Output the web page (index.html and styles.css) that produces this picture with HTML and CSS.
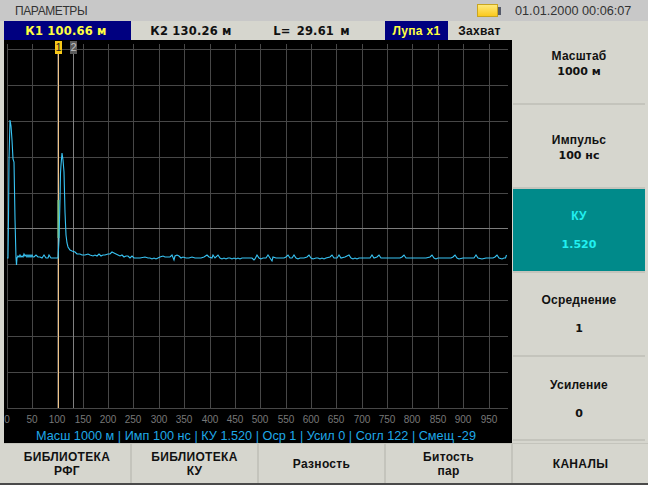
FILE: index.html
```html
<!DOCTYPE html>
<html lang="en">
<head>
    <meta charset="UTF-8">
    <title>Параметры</title>
    <link rel="stylesheet" href="styles.css">
</head>
<body>
    <div class="window">
        <div class="titlebar">
            <span class="title">ПАРАМЕТРЫ</span>
            <span class="battery"><span class="battery-cell"></span><span class="battery-nub"></span></span>
            <span class="clock">01.01.2000 00:06:07</span>
        </div>

        <div class="main">
            <div class="left">
                <div class="readouts">
                    <div class="readout wide selected">К1 100.66 м</div>
                    <div class="readout wide k2">К2 130.26 м</div>
                    <div class="readout wide len">L= 29.61 м</div>
                    <div class="readout zoom selected">Лупа x1</div>
                    <div class="readout zoom">Захват</div>
                </div>

                <!-- Trace plot: viewBox uses page coordinates -->
                <svg class="plot" viewBox="4 40 508 388" width="508" height="388">
                    <rect x="4" y="40" width="508" height="388" fill="#000"/>
                    <g class="grid">
                        <path d="M7 49.5H508M7 85.5H508M7 121.5H508M7 157.5H508M7 193.5H508M7 264.5H508M7 300.5H508M7 336.5H508M7 372.5H508M7 408.5H508"/>
                        <path d="M7.5 44V408M32.5 44V408M57.5 44V408M83.5 44V408M108.5 44V408M133.5 44V408M159.5 44V408M184.5 44V408M210.5 44V408M235.5 44V408M260.5 44V408M286.5 44V408M311.5 44V408M336.5 44V408M362.5 44V408M387.5 44V408M412.5 44V408M438.5 44V408M463.5 44V408M489.5 44V408"/>
                    </g>
                    <path class="grid-major" d="M7 228.5H508"/>

                    <path class="cursor-two" d="M73.5 53V408"/>
                    <path class="cursor-one" d="M58.5 53V408"/>
                    <path class="cursor-hit" d="M58.5 200V238"/>

                    <polyline class="trace" points="7,258 8,258 8.5,219 9,160 10,120 11,126 12,140 13,159 14,162 15,219 16,258 16.5,265 17,258 18,256 19,257 20,255 21,257 22,256 23,257 24,254 25,256 26,255 27,257 28,255 29,257 30,255 31,257 32,255 33,257 34,257 36,255 38,257 40,257 42,258 44,255 46,258 48,258 49,255 51,258 54,258 58,258 59,240 60,200 60.5,173 61,165 62,153 63,160 64,172 65,212 66,235 67,243 68,247 70,250 72,251 75,252 77,254 80,254 82,255 85,255 88,254 90,255 93,256 95,255 97,256 99,254 101,256 103,255 105,255 108,254 110,254 112,252 114,253 116,254 118,255 120,256 122,255 124,257 126,256 128,256 130,258 132,256 134,258 136,258 140,258 145,257 148,258 150,258 152,259 154,258 156,259 158,258 160,257 163,256 165,257 170,257 172,255 174,260 175,256 177,255 179,256 181,258 183,257 186,258 189,258 192,257 195,258 198,258 201,258 204,257 207,255 209,257 212,258 213,255 215,258 218,255 220,258 222,259 224,258 226,259 228,258 230,258 232,259 234,258 236,259 238,258 240,259 242,258 244,258 248,258 252,258 254,260 255,259 257,255 259,258 261,259 263,258 266,258 268,255 270,258 272,261 273,257 276,258 280,258 284,258 286,257 288,255 290,258 292,258 294,255 296,258 298,259 300,258 304,258 307,257 309,255 311,258 313,259 316,258 318,258 320,259 322,258 324,259 326,258 330,257 332,255 334,258 337,258 339,255 341,258 345,257 349,255 351,258 353,259 355,258 357,259 359,258 363,258 367,258 370,258 372,255 374,258 377,257 379,255 381,258 385,258 390,258 395,258 400,258 402,257 404,255 406,258 410,258 413,258 418,258 422,258 426,258 430,257 432,255 434,258 436,259 438,258 442,258 447,258 451,258 453,257 455,255 457,258 459,259 463,258 467,258 471,258 474,258 476,255 478,258 482,259 486,258 490,258 493,258 495,257 497,255 499,258 502,259 504,258 505.5,258 506.5,255"/>

                    <g class="flag">
                        <rect class="flag-one" x="55" y="41" width="7" height="13"/>
                        <rect class="flag-two" x="70" y="41" width="7" height="13"/>
                        <text class="flag-num" x="58.5" y="51">1</text>
                        <text class="flag-num dim" x="73.5" y="51">2</text>
                    </g>

                    <g class="ticks">
                        <text x="7" y="423">0</text>
                        <text x="32" y="423">50</text>
                        <text x="57" y="423">100</text>
                        <text x="83" y="423">150</text>
                        <text x="108" y="423">200</text>
                        <text x="133" y="423">250</text>
                        <text x="159" y="423">300</text>
                        <text x="184" y="423">350</text>
                        <text x="210" y="423">400</text>
                        <text x="235" y="423">450</text>
                        <text x="260" y="423">500</text>
                        <text x="286" y="423">550</text>
                        <text x="311" y="423">600</text>
                        <text x="336" y="423">650</text>
                        <text x="362" y="423">700</text>
                        <text x="387" y="423">750</text>
                        <text x="412" y="423">800</text>
                        <text x="438" y="423">850</text>
                        <text x="463" y="423">900</text>
                        <text x="489" y="423">950</text>
                    </g>
                </svg>

                <div class="status">Масш 1000 м | Имп 100 нс | КУ 1.520 | Оср 1 | Усил 0 | Согл 122 | Смещ -29</div>
            </div>

            <div class="side">
                <div class="side-btn first"><div>Масштаб</div><div class="val">1000 м</div></div>
                <div class="side-btn second"><div>Импульс</div><div class="val">100 нс</div></div>
                <div class="side-btn spaced active"><div>КУ</div><div class="val">1.520</div></div>
                <div class="side-btn spaced"><div>Осреднение</div><div class="val">1</div></div>
                <div class="side-btn spaced low"><div>Усиление</div><div class="val">0</div></div>
            </div>
        </div>

        <div class="bottom">
            <div class="bottom-btn first-btn">БИБЛИОТЕКА<br>РФГ</div>
            <div class="bottom-btn">БИБЛИОТЕКА<br>КУ</div>
            <div class="bottom-btn">Разность</div>
            <div class="bottom-btn">Битость<br>пар</div>
            <div class="bottom-btn last">КАНАЛЫ</div>
        </div>
    </div>
</body>
</html>
```

FILE: styles.css
```css
body {
    margin: 0;
    background: #d4d4cc;
    font-family: "Liberation Sans", Arial, sans-serif;
}

.window {
    width: 648px;
    height: 485px;
    box-sizing: border-box;
    padding-left: 4px;
    background: #d6d6ce;
    border-bottom: 2px solid #4a4a4a;
    overflow: hidden;
}

.titlebar {
    height: 21px;
    margin-left: -4px;
    padding-left: 15px;
    background: #c8c8c8;
    display: flex;
    align-items: center;
    font-size: 12px;
    color: #333;
}

.title {
    width: 462px;
    letter-spacing: -0.4px;
}

.battery {
    width: 24px;
    display: flex;
    align-items: center;
}

.battery-cell {
    width: 19px;
    height: 11px;
    border: 1px solid #c9a520;
    background: linear-gradient(#ffe97a, #fbc91e);
}

.battery-nub {
    width: 3px;
    height: 8px;
    background: #555a6a;
}

.clock {
    margin-left: 14px;
    font-size: 12.7px;
}

.main {
    display: flex;
    height: 422px;
}

.left {
    width: 508px;
}

.readouts {
    display: flex;
    height: 19px;
}

.readout {
    display: flex;
    align-items: center;
    justify-content: center;
    font-size: 12px;
    font-weight: bold;
    color: #111;
}

.wide {
    width: 127px;
    box-sizing: border-box;
    padding-right: 3px;
    font-family: "DejaVu Sans", sans-serif;
    font-size: 11.5px;
    letter-spacing: 0.2px;
}

.k2 {
    padding-right: 7px;
}

.len {
    padding-right: 20px;
    word-spacing: 2px;
}

.zoom {
    width: 63px;
    letter-spacing: 0.3px;
}

.selected {
    background: #000080;
    color: #ffff40;
}

.plot {
    display: block;
}

.grid path {
    stroke: #474747;
    stroke-width: 1;
    fill: none;
    shape-rendering: crispEdges;
}

.grid-major {
    stroke: #7c7c7c;
    stroke-width: 1;
    fill: none;
    shape-rendering: crispEdges;
}

.cursor-one {
    stroke: #f0c488;
    stroke-width: 1;
    shape-rendering: crispEdges;
}

.cursor-two {
    stroke: #808080;
    stroke-width: 1;
    shape-rendering: crispEdges;
}

.cursor-hit {
    stroke: #7cc47c;
    stroke-width: 2;
}

.trace {
    fill: none;
    stroke: #38c4f4;
    stroke-width: 1.1;
}

.flag-one {
    fill: #f8c818;
}

.flag-two {
    fill: #5a5a5a;
}

.flag-num {
    font-size: 11px;
    text-anchor: middle;
    fill: #222;
}

.flag-num.dim {
    fill: #c0c0c0;
}

.ticks text {
    font-size: 10px;
    text-anchor: middle;
    fill: #787878;
}

.status {
    height: 15px;
    line-height: 16px;
    background: #000;
    color: #1fa8e8;
    font-size: 12.7px;
    text-align: center;
    padding-right: 4px;
    box-sizing: border-box;
    white-space: nowrap;
}

.side {
    width: 132px;
    margin-left: 1px;
    display: flex;
    flex-direction: column;
}

.side-btn {
    height: 84px;
    box-sizing: border-box;
    border-bottom: 2px solid #c4c4bc;
    padding-top: 20px;
    text-align: center;
    font-size: 12px;
    font-weight: bold;
    line-height: 15px;
    letter-spacing: 0.2px;
    color: #111;
}

.side-btn.first {
    padding-top: 28px;
}

.side-btn.second {
    padding-top: 28px;
}

.side-btn.spaced {
    display: flex;
    flex-direction: column;
    gap: 13px;
}

.side-btn.low {
    padding-top: 21px;
}

.side-btn.active {
    background: #008a8a;
    color: #20f0f0;
}

.val {
    font-family: "DejaVu Sans", sans-serif;
    font-size: 11px;
    letter-spacing: 0;
}

.bottom {
    display: flex;
    height: 40px;
}

.bottom-btn {
    width: 127px;
    box-sizing: border-box;
    border-right: 2px solid #c4c4bc;
    border-top: 1px solid #c4c4bc;
    display: flex;
    align-items: center;
    justify-content: center;
    text-align: center;
    font-size: 12px;
    font-weight: bold;
    line-height: 14px;
    letter-spacing: 0.3px;
    color: #111;
}

.bottom-btn.first-btn {
    width: 128px;
}

.bottom-btn.last {
    border-right: none;
    width: 135px;
}
```
